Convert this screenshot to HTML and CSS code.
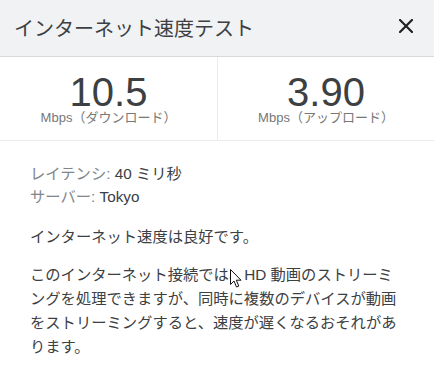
FILE: index.html
```html
<!DOCTYPE html>
<html lang="ja">
<head>
    <meta charset="UTF-8">
    <meta name="viewport" content="width=device-width, initial-scale=1.0">
    <title>インターネット速度テスト</title>
    <link rel="stylesheet" href="styles.css">
</head>
<body>

<div class="panel">
    <header class="bar">
        <div class="bar-title">インターネット速度テスト</div>
        <button class="close" aria-label="閉じる">
            <svg width="14" height="14" viewBox="0 0 14 14">
                <path d="M1 1 L13 13 M13 1 L1 13" stroke="#202124" stroke-width="2.2" stroke-linecap="square"/>
            </svg>
        </button>
    </header>

    <div class="stats">
        <div class="stat">
            <div class="stat-value">10.5</div>
            <div class="stat-label">Mbps（ダウンロード）</div>
        </div>
        <div class="stat">
            <div class="stat-value">3.90</div>
            <div class="stat-label">Mbps（アップロード）</div>
        </div>
    </div>

    <div class="details">
        <div class="meta">
            <div><span class="meta-key">レイテンシ: </span><span class="meta-val">40 ミリ秒</span></div>
            <div><span class="meta-key">サーバー: </span><span class="meta-val">Tokyo</span></div>
        </div>
        <p class="summary">インターネット速度は良好です。</p>
        <p class="summary">このインターネット接続では、HD 動画のストリーミングを処理できますが、同時に複数のデバイスが動画をストリーミングすると、速度が遅くなるおそれがあります。</p>
    </div>

    <!-- mouse pointer captured in the screenshot -->
    <svg class="pointer" width="12" height="19" viewBox="0 0 12 19">
        <path d="M0.5 0.5 L0.5 15.5 L4 12 L6.5 18 L8.8 17 L6.3 11.2 L11 11.2 Z" fill="#fff" stroke="#111" stroke-width="1"/>
    </svg>
</div>

</body>
</html>
```

FILE: styles.css
```css
body {
    margin: 0;
    padding: 0;
    background-color: #fff;
    color: #3c4043;
    font-family: "Liberation Sans", Arial, "Noto Sans CJK JP", sans-serif;
}
.panel {
    position: relative;
    width: 434px;
    height: 377px;
    overflow: hidden;
}
.bar {
    height: 56px;
    padding: 0 14px 0 14px;
    display: flex;
    align-items: center;
    justify-content: space-between;
    background-color: #f1f2f4;
    border-bottom: 1px solid #d9d9d9;
}
.bar-title {
    font-size: 20px;
    color: #3c4043;
    margin-top: -2px;
}
.close {
    border: none;
    background: none;
    padding: 0;
    margin-right: 7px;
    margin-top: -4px;
    width: 14px;
    height: 14px;
    display: flex;
}
.stats {
    display: grid;
    grid-template-columns: 1fr 1fr;
    border-bottom: 1px solid #ececec;
    height: 83px;
}
.stat {
    text-align: center;
    padding-top: 16px;
}
.stat + .stat {
    border-left: 1px solid #ececec;
}
.stat-value {
    font-size: 40px;
    line-height: 38px;
    color: #3c4043;
}
.stat-label {
    font-size: 13px;
    line-height: 14px;
    color: #777;
}
.details {
    padding: 21px 34px 0 30px;
    font-size: 15.3px;
}
.meta {
    line-height: 23px;
}
.meta-key {
    color: #80868b;
}
.meta-val {
    color: #3c4043;
}
.summary {
    margin: 17px 0 0 0;
    line-height: 24px;
    color: #3c4043;
}
.summary + .summary {
    margin-top: 14px;
}
.pointer {
    position: absolute;
    left: 230px;
    top: 269px;
}
```
